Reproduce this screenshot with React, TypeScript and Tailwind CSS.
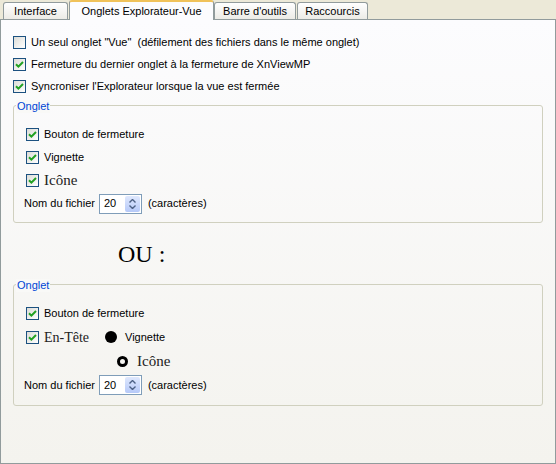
import React from 'react';

const sans = "font-['Liberation_Sans',Arial,sans-serif]";
const serif = "font-['Liberation_Serif','Times_New_Roman',serif]";

function CheckBox({ checked }: { checked: boolean }) {
  return (
    <span className="flex h-[13px] w-[13px] shrink-0 items-center justify-center border border-[#1c5180] bg-gradient-to-br from-[#dcdcd7] to-white">
      {checked && (
        <svg width="9" height="9" viewBox="0 0 9 9">
          <path d="M1 4.2 L3.4 6.6 L8 2" fill="none" stroke="#21a121" strokeWidth="2" />
        </svg>
      )}
    </span>
  );
}

function Spin() {
  return (
    <div className="flex h-[20px] w-[43px] items-stretch border border-[#7f9db9] bg-white">
      <span className="flex flex-1 items-center pl-[4px] text-[11px] text-black">20</span>
      <div className="my-[1px] mr-[1px] flex w-[15px] flex-col items-center justify-center gap-[2px] rounded-[2px] bg-gradient-to-b from-[#dfe8fd] to-[#b6c9f8]">
        <svg width="7" height="4" viewBox="0 0 7 4">
          <path d="M0.5 3.5 L3.5 0.5 L6.5 3.5" fill="none" stroke="#4d6185" strokeWidth="1.4" />
        </svg>
        <svg width="7" height="4" viewBox="0 0 7 4">
          <path d="M0.5 0.5 L3.5 3.5 L6.5 0.5" fill="none" stroke="#4d6185" strokeWidth="1.4" />
        </svg>
      </div>
    </div>
  );
}

function NomRow({ h }: { h: string }) {
  return (
    <div className={`flex ${h} items-center`}>
      <span className="mr-[4px]">Nom du fichier</span>
      <Spin />
      <span className="ml-[6px]">(caractères)</span>
    </div>
  );
}

function Group({ children, className }: { children: React.ReactNode; className: string }) {
  return (
    <div className={`relative mx-[12px] rounded-[3px] border border-[#d0d0bf] ${className}`}>
      <span className="absolute left-[2px] top-[-6px] bg-[#f9f9f7] px-[1px] text-[11px] leading-[13px] text-[#0046d5]">Onglet</span>
      {children}
    </div>
  );
}

export default function App() {
  const tabs = [
    { label: 'Interface', w: 'w-[65px]', active: false },
    { label: 'Onglets Explorateur-Vue', w: 'w-[145px]', active: true },
    { label: "Barre d'outils", w: 'w-[82px]', active: false },
    { label: 'Raccourcis', w: 'w-[71px]', active: false },
  ];

  return (
    <div className={`flex h-[464px] w-[556px] flex-col bg-[#ece9d8] text-[11px] text-black ${sans}`}>
      <div className="relative z-10 flex h-[19px] items-end pl-[3px]">
        {tabs.map((t) =>
          t.active ? (
            <div
              key={t.label}
              className={`${t.w} -mb-px flex h-[20px] items-center justify-center rounded-t-[3px] border-x border-t-[2px] border-x-[#919b9c] border-t-[#f0c25a] bg-[#fcfcfe] text-[11px]`}
            >
              {t.label}
            </div>
          ) : (
            <div
              key={t.label}
              className={`${t.w} mr-[1px] flex h-[17px] items-center justify-center rounded-t-[3px] border border-b-0 border-[#919b9c] bg-gradient-to-b from-white to-[#ecebe6]`}
            >
              {t.label}
            </div>
          ),
        )}
      </div>

      <div className="flex-1 border border-[#919b9c] bg-gradient-to-b from-[#fcfcfe] to-[#f4f3ee]">
        <div className="flex flex-col px-[12px] pt-[11px]">
          <label className="flex h-[22px] items-center gap-[5px]">
            <CheckBox checked={false} />
            <span>Un seul onglet "Vue"&nbsp; (défilement des fichiers dans le même onglet)</span>
          </label>
          <label className="flex h-[22px] items-center gap-[5px]">
            <CheckBox checked />
            <span>Fermeture du dernier onglet à la fermeture de XnViewMP</span>
          </label>
          <label className="flex h-[22px] items-center gap-[5px]">
            <CheckBox checked />
            <span>Syncroniser l'Explorateur lorsque la vue est fermée</span>
          </label>
        </div>

        <Group className="mt-[8px] pb-[7px] pl-[10px] pt-[17px]">
          <label className="flex h-[23px] items-center gap-[5px] pl-[2px]">
            <CheckBox checked />
            <span>Bouton de fermeture</span>
          </label>
          <label className="flex h-[23px] items-center gap-[5px] pl-[2px]">
            <CheckBox checked />
            <span>Vignette</span>
          </label>
          <label className="flex h-[23px] items-center gap-[5px] pl-[2px]">
            <CheckBox checked />
            <span className={`${serif} text-[15px] text-[#222]`}>Icône</span>
          </label>
          <NomRow h="h-[23px]" />
        </Group>

        <div className="flex h-[61px] items-center pl-[117px]">
          <span className={`${serif} text-[24px] leading-none`}>OU :</span>
        </div>

        <Group className="pb-[8px] pl-[10px] pt-[16px]">
          <label className="flex h-[24px] items-center gap-[5px] pl-[2px]">
            <CheckBox checked />
            <span>Bouton de fermeture</span>
          </label>
          <div className="flex h-[24px] items-center pl-[2px]">
            <CheckBox checked />
            <span className={`${serif} ml-[5px] w-[61px] text-[14px] text-[#222]`}>En-Tête</span>
            <span className="h-[12px] w-[12px] rounded-full bg-black" />
            <span className="ml-[8px]">Vignette</span>
          </div>
          <div className="flex h-[24px] items-center pl-[93px]">
            <span className="h-[11px] w-[11px] rounded-full border-[3px] border-black" />
            <span className={`${serif} ml-[9px] text-[15px] text-[#222]`}>Icône</span>
          </div>
          <NomRow h="h-[24px]" />
        </Group>
      </div>
    </div>
  );
}
